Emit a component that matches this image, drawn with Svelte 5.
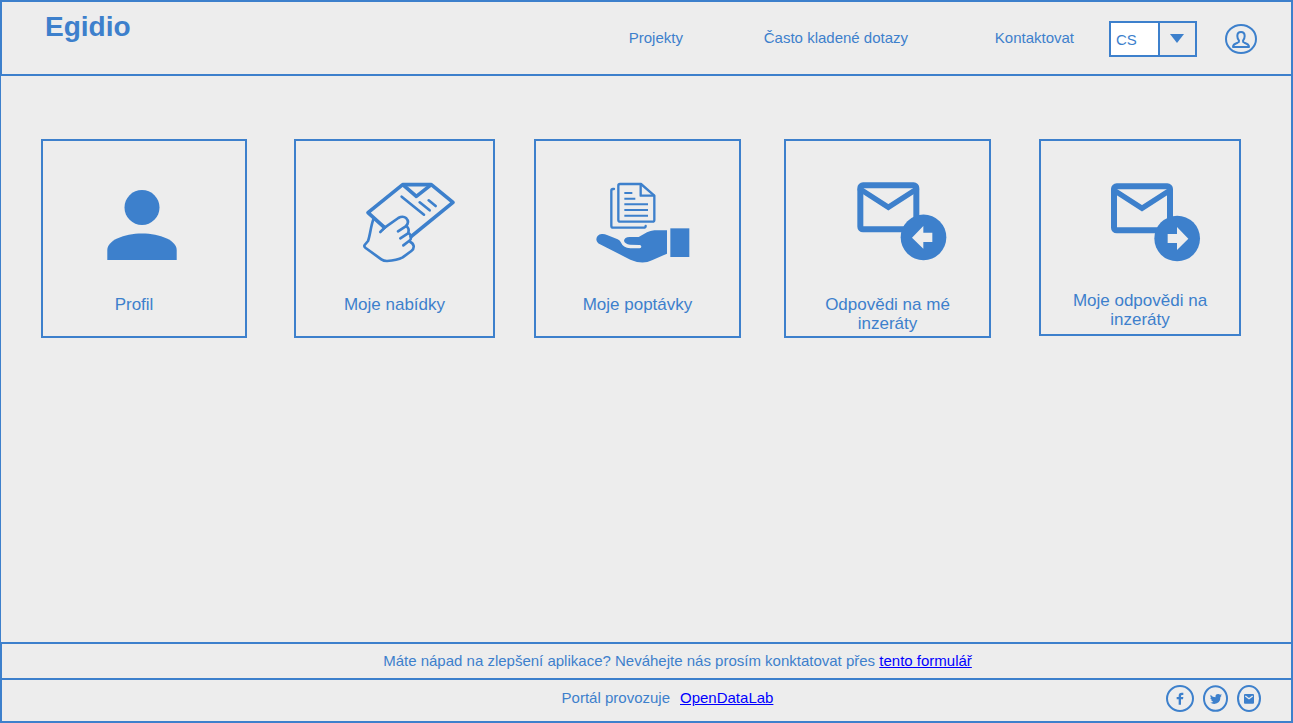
<script>
  const languages = ['CS', 'EN'];
  let language = $state('CS');
</script>

<div class="page">
  <header>
    <h1>Egidio</h1>
    <nav aria-label="Egidio">
      <a href="#projekty">Projekty</a>
      <a href="#dotazy">Často kladené dotazy</a>
      <a href="#kontakt">Kontaktovat</a>
    </nav>
    <div class="language">
      <select bind:value={language} aria-label="Jazyk">
        {#each languages as code}
          <option value={code}>{code}</option>
        {/each}
      </select>
      <svg class="arrow" viewBox="0 0 14 9" aria-hidden="true"><path d="M0 0h14L7 9z" /></svg>
    </div>
    <button class="account" aria-label="Účet">
      <svg viewBox="765 72 96 90" aria-hidden="true">
        <g class="line" stroke-width="6">
          <ellipse cx="813" cy="117" rx="45" ry="42" />
          <path d="M813 96q-11 0-11 12 0 8 5 14 1 4-4 6-14 4-14 13h48q0-9-14-13-5-2-4-6 5-6 5-14 0-12-11-12z" />
        </g>
      </svg>
    </button>
  </header>

  <main>
    <a class="card lead" href="#profil">
      <svg viewBox="64 165 160 110" aria-hidden="true">
        <circle cx="142" cy="207.500" r="17.500" />
        <path d="M107.300 260v-10c0-9.500 16.500-16.500 34.700-16.500s34.700 7 34.700 16.500v10z" />
      </svg>
      <span>Profil</span>
    </a>

    <a class="card" href="#nabidky">
      <svg viewBox="-106 -15 480 330" aria-hidden="true">
        <g class="line" stroke-width="11">
          <path d="M102 172L53 128 157 44h86l65 53-126 103" />
          <path d="M160 46l38 33 42-33" />
        </g>
        <path d="M86 157l25 14-13 12q3-8-12-26z" />
        <g class="line" stroke-width="8">
          <path d="M154 80l67 54M208 97l30 24M235 91l21 17" />
          <path d="M69 148c-8 22-9 45-16 65l-10 12q-3 4 3 9l47 34q7 5 17 5 30-2 47-11l26-19q8-6 7-15-2-9-11-13" />
          <path d="M90 186l13-13 41-29q14-8 24 1 11 11-2 24l-23 15" />
          <path d="M168 168q11 9 5 22l-23 15M175 189q8 7 7 14 0 6-6 10l-17 13" />
        </g>
      </svg>
      <span>Moje nabídky</span>
    </a>

    <a class="card" href="#poptavky">
      <svg viewBox="-67 -15 480 330" aria-hidden="true">
        <g class="line" stroke-width="7">
          <path d="M182 42h-63q-5 0-5 5v103q0 5 5 5h98q5 0 5-5V77z" />
          <path d="M181 43v34h40" />
          <path d="M101 57h-3q-5 0-5 5v105q0 6 6 6h91q6 0 6-5" />
        </g>
        <path d="M132 66h24v6h-24zM132 83h33v6h-33zM132 100h71v6h-71zM132 117h71v6h-71zM132 134h71v6h-71z" />
        <path d="M64 192q-15 2-16 16 1 11 11 15l91 46q36 16 65 2l45-20v-70h-38q-12 1-22 6l-25 14h-27q-16 1-17 11 2 9 18 12l29 1q5 1 5 5t-5 5h-28q-22-2-29-19-2-5-9-8l-32-13q-8-4-16-3z" />
        <path d="M270 175h57v86h-57z" />
      </svg>
      <span>Moje poptávky</span>
    </a>

    <a class="card" href="#odpovedi-na-me">
      <svg viewBox="-97 -15 480 330" aria-hidden="true">
        <rect class="line" x="60" y="46" width="168" height="132" rx="8" stroke-width="18" />
        <path class="line flap" d="M60 58l84 54 84-54" stroke-width="16" />
        <circle cx="249.500" cy="202" r="68.500" />
        <path class="cut" d="M215 203l34-35v20h27v28h-27v20z" />
      </svg>
      <span>Odpovědi na mé inzeráty</span>
    </a>

    <a class="card compact" href="#moje-odpovedi">
      <svg viewBox="-105 -15 480 330" aria-hidden="true">
        <rect class="line" x="57" y="49" width="168" height="132" rx="8" stroke-width="18" />
        <path class="line flap" d="M57 61l84 54 84-54" stroke-width="16" />
        <circle cx="246.500" cy="205.500" r="68.500" />
        <path class="cut" d="M280 206l-34-35v21h-28v27h28v21z" />
      </svg>
      <span>Moje odpovědi na inzeráty</span>
    </a>
  </main>

  <footer>
    <p class="feedback">
      Máte nápad na zlepšení aplikace? Neváhejte nás prosím konktatovat přes
      <a href="#formular">tento formulář</a>
    </p>
    <div class="operator">
      <p>
        <span>Portál provozuje</span>
        <a href="#opendatalab">OpenDataLab</a>
      </p>
      <div class="social">
        <a href="#facebook" aria-label="Facebook">
          <svg width="28" height="27" viewBox="48 150 84 81" aria-hidden="true">
            <ellipse class="line" cx="90" cy="190.500" rx="39" ry="37.500" stroke-width="6" />
            <path d="M86 209v-16h-6v-7h6v-4q0-9 9-9h5v7h-4q-3 0-3 3v3h7l-1 7h-6v16z" />
          </svg>
        </a>
        <a href="#twitter" aria-label="Twitter">
          <svg width="25" height="27" viewBox="159 150 76 81" aria-hidden="true">
            <ellipse class="line" cx="197" cy="190.500" rx="35" ry="37.500" stroke-width="6" />
            <path d="M182 179q6 8 15 8-1-10 8-10 4 0 6 2l5-2-3 5 3 0-4 4q0 20-19 21-7 0-12-4 6 0 9-3-5-1-6-5h3q-5-2-6-7l3 1q-4-4-2-10z" />
          </svg>
        </a>
        <a href="#email" aria-label="E-mail">
          <svg width="24" height="27" viewBox="261 150 72 81" aria-hidden="true">
            <ellipse class="line" cx="297" cy="190.500" rx="33" ry="37.500" stroke-width="6" />
            <rect x="282" y="177" width="30" height="29" rx="3" />
            <path class="gap" d="M286 183l11 8 11-8" />
          </svg>
        </a>
      </div>
    </div>
  </footer>
</div>

<style>
  :global(body) {
    margin: 0;
  }

  .page {
    --ink: #3d80cc;
    --paper: #ededed;
    display: flex;
    flex-direction: column;
    box-sizing: border-box;
    min-height: 100vh;
    background: var(--paper);
    color: var(--ink);
    font: 15px/18px 'Liberation Sans', Arial, sans-serif;
  }

  h1,
  p {
    margin: 0;
  }

  svg {
    display: block;
    fill: var(--ink);
  }

  .line {
    fill: none;
    stroke: var(--ink);
    stroke-linecap: round;
    stroke-linejoin: round;
  }

  .flap {
    stroke-linejoin: miter;
  }

  .cut {
    fill: var(--paper);
  }

  .gap {
    fill: none;
    stroke: var(--paper);
    stroke-width: 4px;
  }

  header {
    display: flex;
    align-items: center;
    box-sizing: border-box;
    min-height: 76px;
    padding: 2px 34px 0 43px;
    border: 2px solid var(--ink);
  }

  h1 {
    align-self: flex-start;
    padding-top: 7px;
    font-size: 28px;
    line-height: 32px;
  }

  nav {
    display: grid;
    grid-template-columns: 135px 231px auto;
    margin-left: auto;
    padding-bottom: 2px;
  }

  nav a,
  .card {
    color: inherit;
    text-decoration: none;
  }

  .language {
    display: grid;
    align-items: center;
    margin: 0 28px 0 35px;
  }

  .language > * {
    grid-area: 1 / 1;
  }

  select {
    appearance: none;
    width: 88px;
    height: 36px;
    padding: 2px 38px 0 5px;
    border: 2px solid var(--ink);
    border-radius: 0;
    background: linear-gradient(to right, #fff 47px, var(--ink) 47px 49px, var(--paper) 49px);
    color: inherit;
    font: inherit;
  }

  .arrow {
    justify-self: end;
    width: 14px;
    height: 9px;
    margin: 0 13px 2px 0;
    pointer-events: none;
  }

  .account {
    padding: 0;
    border: 0;
    background: none;
  }

  .account svg {
    width: 32px;
    height: 30px;
  }

  main {
    display: grid;
    flex: 1;
    grid-template-columns: 206fr 47fr 201fr 39fr 207fr 43fr 207fr 48fr 202fr;
    align-items: start;
    padding: 63px 50px 63px 40px;
    border: solid var(--ink);
    border-width: 0 2px 0 1px;
  }

  .card {
    display: flex;
    flex-direction: column;
    align-items: center;
    gap: 20px;
    padding: 24px 16px 3px;
    border: 2px solid var(--ink);
    font-size: 17px;
    line-height: 19px;
    text-align: center;
  }

  .card:nth-child(2) {
    grid-column: 3;
  }

  .card:nth-child(3) {
    grid-column: 5;
  }

  .card:nth-child(4) {
    grid-column: 7;
  }

  .card:nth-child(5) {
    grid-column: 9;
  }

  .card svg {
    width: 160px;
    height: 110px;
  }

  .card span {
    min-height: 38px;
  }

  .lead span {
    padding-right: 20px;
  }

  .compact {
    gap: 16px;
    padding-bottom: 5px;
  }

  footer a {
    color: #00f;
  }

  .feedback {
    padding: 8px 0 8px 62px;
    border: 2px solid var(--ink);
    text-align: center;
  }

  .operator {
    display: grid;
    grid-template-columns: 1fr auto 1fr;
    align-items: center;
    padding: 5px 30px 9px 72px;
    border: 2px solid var(--ink);
    border-top: 0;
  }

  .operator p {
    display: flex;
    grid-column: 2;
    gap: 10px;
    padding-bottom: 2px;
  }

  .social {
    display: flex;
    justify-content: flex-end;
    gap: 9px;
  }
</style>
